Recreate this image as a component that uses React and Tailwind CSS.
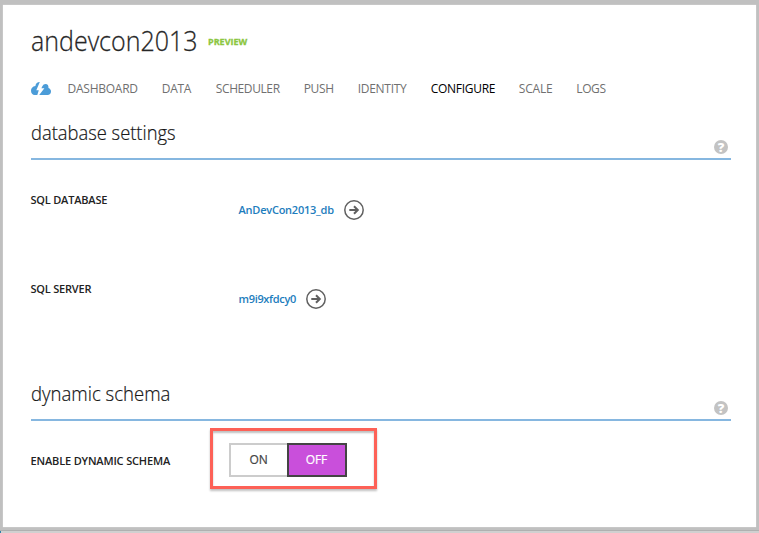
import React from "react";

const tabs = [
  { label: "DASHBOARD", box: "w-[94.3px]", tracking: "tracking-[-0.25px]" },
  { label: "DATA", box: "w-[54px]", tracking: "tracking-[-0.3px]" },
  { label: "SCHEDULER", box: "w-[88px]", tracking: "tracking-[-0.4px]" },
  { label: "PUSH", box: "w-[54px]", tracking: "tracking-[-0.4px]" },
  { label: "IDENTITY", box: "w-[73px]", tracking: "tracking-[-0.3px]" },
  { label: "CONFIGURE", box: "w-[88px]", tracking: "tracking-[-0.3px]", active: true },
  { label: "SCALE", box: "w-[57.5px]", tracking: "tracking-[-0.2px]" },
  { label: "LOGS", box: "w-[40px]", tracking: "tracking-[-0.4px]" },
];

function CloudIcon() {
  return (
    <svg className="h-[13px] w-[20px]" viewBox="0 0 20 13" fill="#4b9cd8">
      <path d="M8.800 0C6.400 0 4.700 1.500 4.400 4 1.500 4.400 0 6.400 0 8.800 0 11.400 1.500 13 3.700 13h2.600l1.500-4.800H5.300L8.800 0z" />
      <path d="M11.200 4.500C12 2.800 13.200 2 14.600 2c2 0 3.100 1.600 2.900 3.900 1.600.6 2.500 1.900 2.500 3.500 0 2.100-1.400 3.600-3.400 3.600H8.200l5.200-6.800h-3z" />
    </svg>
  );
}

function HelpIcon() {
  return (
    <span className="mr-[3px] flex size-[14px] items-center justify-center rounded-full bg-[#c3c3c3] text-[13px] leading-[14px] font-extrabold text-white">
      ?
    </span>
  );
}

function ArrowIcon() {
  return (
    <svg className="size-[20px]" viewBox="0 0 20 20" fill="none" stroke="#606060">
      <circle cx="10" cy="10" r="9.200" strokeWidth="1.500" />
      <path d="M5.300 10h8.500M10 6.200l3.800 3.800-3.800 3.800" strokeWidth="2" />
    </svg>
  );
}

function SectionHeader({ title, scale }) {
  return (
    <div className="flex h-[40px] items-end justify-between border-b-2 border-[#86b7e0]">
      <h2 className={"-ml-[0.5px] h-[38px] origin-left text-[20px] leading-[26px] font-light text-[#111] [-webkit-text-stroke:0.2px_#222] " + scale}>
        {title}
      </h2>
      <span className="mb-[4px]">
        <HelpIcon />
      </span>
    </div>
  );
}

function LinkRow({ label, value, tracking }) {
  return (
    <div className="flex h-[89px]">
      <div className="-ml-[0.5px] w-[208px] text-[11px] leading-[16px] font-semibold tracking-[-0.2px] text-[#222]">{label}</div>
      <div className="mt-[8px] flex h-[20px] items-center gap-[10px]">
        <a className={"text-[11px] leading-[16px] font-semibold text-[#1d7dbd] " + tracking}>{value}</a>
        <ArrowIcon />
      </div>
    </div>
  );
}

export default function App() {
  return (
    <div className="flex h-[533px] w-[759px] flex-col overflow-hidden bg-[#c0c0c0] pt-[5px] font-['Open_Sans','Noto_Sans',sans-serif] whitespace-nowrap">
      <main className="ml-[3px] h-[522px] w-[753px] bg-white pt-[15px] pr-[25px] pl-[28px] shadow-[0_0_1px_#eeeeee]">
        <header className="flex h-[40px] items-center">
          <h1 className="-ml-[0.5px] w-[177.500px] origin-left scale-x-[0.893] text-[28px] leading-[40px] font-light text-[#222] [-webkit-text-stroke:0.3px_#333]">
            andevcon2013
          </h1>
          <span className="pt-[4px] text-[9px] leading-[12px] font-bold text-[#8cc63f] [-webkit-text-stroke:0.3px_#8cc63f]">
            PREVIEW
          </span>
        </header>
        <nav className="mt-[19px] flex h-[20px] items-center">
          <span className="flex w-[36.500px] pb-[2px]">
            <CloudIcon />
          </span>
          {tabs.map((t) => (
            <a
              key={t.label}
              className={"text-[12px] leading-[20px] " + t.box + " " + t.tracking + (t.active ? " text-black" : " text-[#707070]")}
            >
              {t.label}
            </a>
          ))}
        </nav>
        <section className="mt-[21px]">
          <SectionHeader title="database settings" scale="scale-x-[0.918]" />
          <div className="h-[221px] pt-[32px]">
            <LinkRow label="SQL DATABASE" value="AnDevCon2013_db" tracking="tracking-[-0.23px]" />
            <LinkRow label="SQL SERVER" value="m9i9xfdcy0" tracking="tracking-[-0.32px]" />
          </div>
        </section>
        <section>
          <SectionHeader title="dynamic schema" scale="scale-x-[0.928]" />
          <div className="flex pt-[7px]">
            <div className="-ml-[0.5px] w-[179.500px] pt-[25px] text-[11px] leading-[16px] font-semibold tracking-[-0.16px] text-[#222]">
              ENABLE DYNAMIC SCHEMA
            </div>
            <div className="h-[61px] w-[167px] border-[3px] border-[#fd6157] pt-[12px] pl-[16px] shadow-[0_2px_2px_#00000040,inset_0_2px_2px_#00000040]">
              <div className="flex h-[34px] text-[12px] leading-[30px] tracking-[-0.1px]">
                <button className="w-[58px] border-2 border-r-0 border-[#ccc] pr-px text-[#444] [-webkit-text-stroke:0.2px_#444]">ON</button>
                <button className="w-[60px] border-2 border-[#444] bg-[#c94fdb] pr-px text-white [-webkit-text-stroke:0.2px_white]">OFF</button>
              </div>
            </div>
          </div>
        </section>
      </main>
      <div className="mt-[3px] flex h-[3px] border-t border-[#b0b0b0] bg-[#d0d0d0]">
        <span className="w-px bg-[#2f7fa8]" />
      </div>
    </div>
  );
}
